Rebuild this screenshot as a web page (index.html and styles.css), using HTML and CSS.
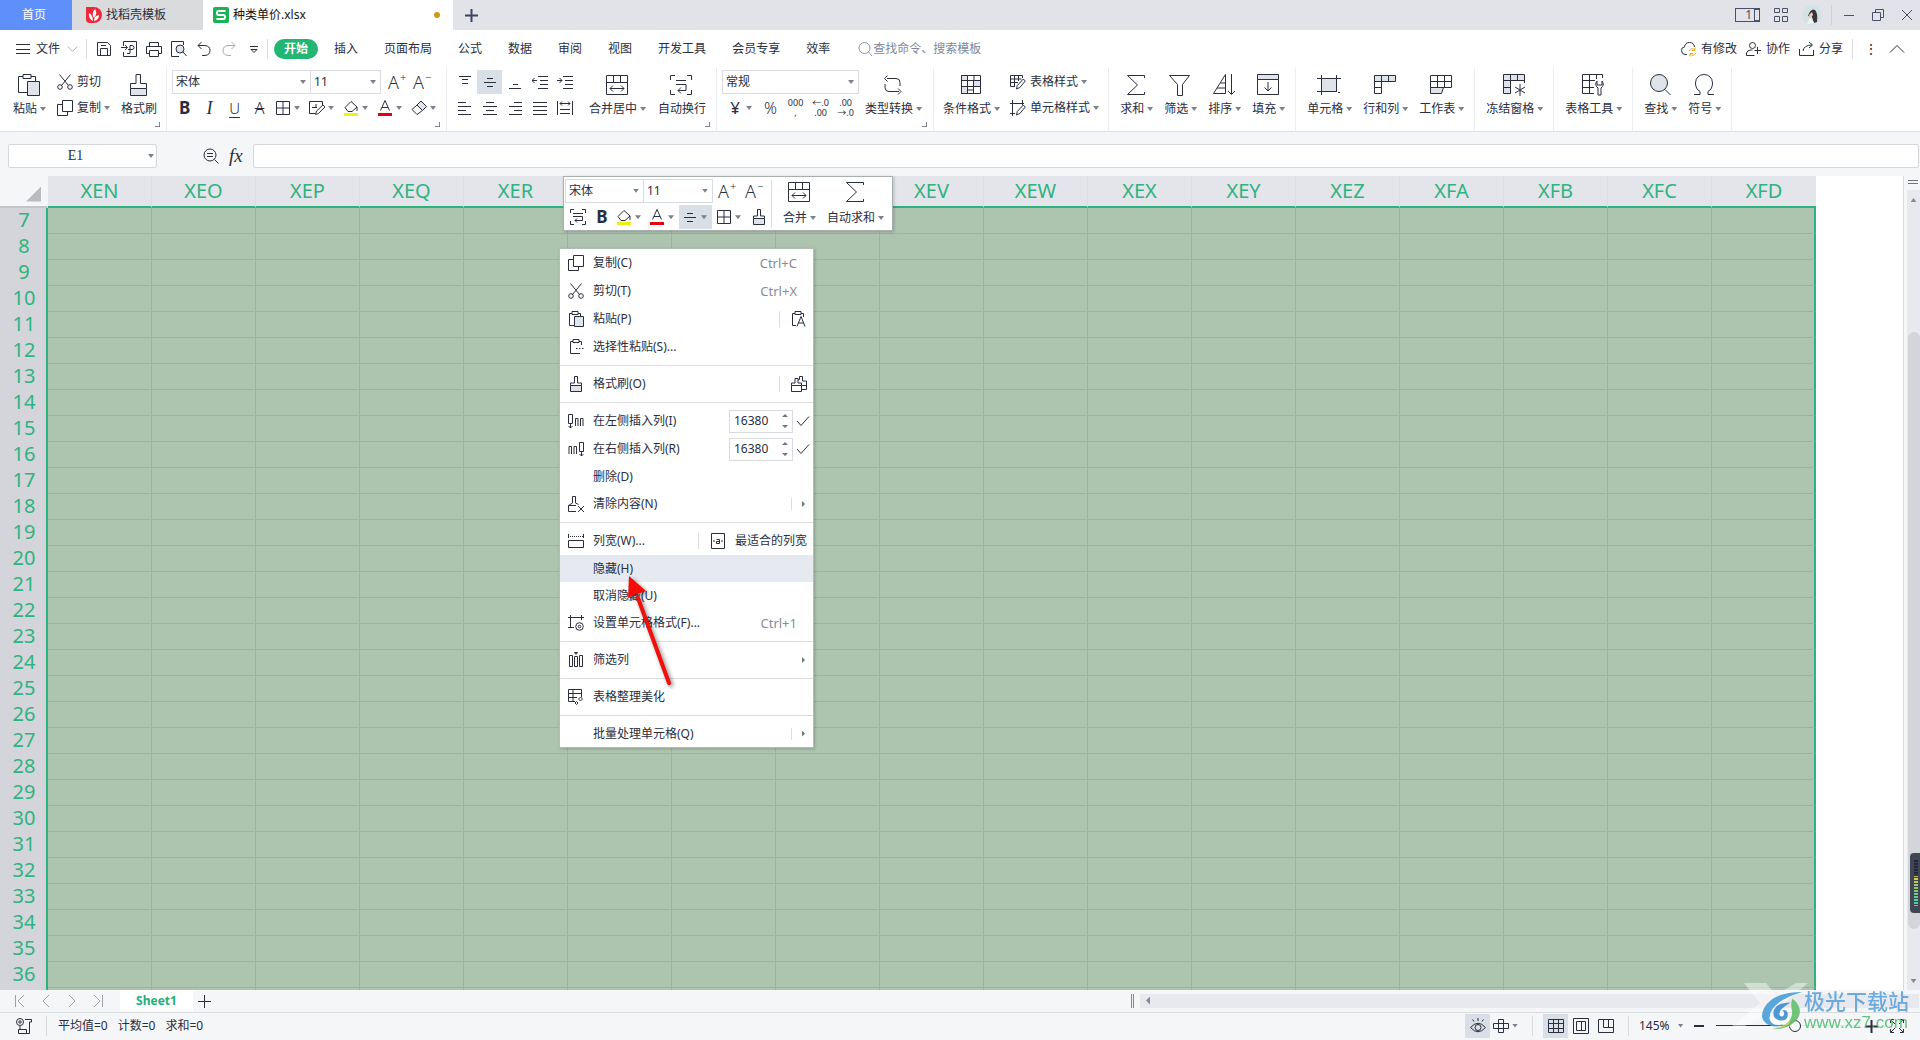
FILE: index.html
```html
<!DOCTYPE html>
<html lang="zh-CN">
<head>
<meta charset="utf-8">
<title>种类单价.xlsx</title>
<link rel="stylesheet" href="styles.css">
</head>
<body>
<svg class="sprite" aria-hidden="true">
  <symbol id="paste" viewBox="0 0 24 24"><path d="M6 3.500H1.500v16H10M14 3.500h4.500V8M6 1.500h8v4H6z"/><path class="tint" d="M10.500 8.500h12v14h-12z"/></symbol>
  <symbol id="paste-s" viewBox="0 0 16 16"><path d="M4 2.500H1.500v12H6M10 2.500h2.500V5M4 .5h6v3H4z"/><path class="tint" d="M6.500 5.500h9v10h-9z"/></symbol>
  <symbol id="paste-a" viewBox="0 0 16 16"><path d="M4 2.500H1.500v12H5M10 2.500h2.500V6M4 .5h6v3H4zM6 15.500l4-10 4 10M7.500 12h5"/></symbol>
  <symbol id="paste-d" viewBox="0 0 16 16"><path d="M5 2.500H2.500v12H12M11 2.500h2.500V6M5 .5h6v3H5zM8 9.500h1.500M11 9.500h1.500M14 9.500h1.500"/></symbol>
  <symbol id="cut" viewBox="0 0 16 16"><path d="M2.500.5l9 11M13.500.5l-9 11"/><circle cx="3" cy="13" r="2.300"/><circle cx="13" cy="13" r="2.300"/></symbol>
  <symbol id="copy" viewBox="0 0 16 16"><path d="M5.500.5h10v11h-10zM5.500 4.500h-5v11h10v-4"/></symbol>
  <symbol id="brush" viewBox="0 0 24 24"><path class="tint" d="M4.500 15.500h16v7h-16z"/><path d="M4.500 15.500v-5h5.500v-9h4.500v9h6v5"/></symbol>
  <symbol id="brush-s" viewBox="0 0 16 16"><path class="tint" d="M2.500 9.500h11v6h-11z"/><path d="M2.500 9.500v-2.500h4V.5h3V7h4v2.500"/></symbol>
  <symbol id="brush-2" viewBox="0 0 16 16"><path d="M.5 9.500h10v6H.5zM.5 9.500V7H4V2.500h3V7h3.500v2.500M7 4l1.500-.5V.5h3V5h4v8.500h-5M11 9.500h4.500"/></symbol>
  <symbol id="clear" viewBox="0 0 16 16"><path d="M8 15.500H.5v-6L4.500 7V.5h3V7l3 1.500M.5 9.500H8M10 10l6 6M16 10l-6 6"/></symbol>
  <symbol id="grid" viewBox="0 0 16 16"><path d="M1.500 1.500h13v13h-13zM8 1.500v13M1.500 8h13"/></symbol>
  <symbol id="pen-grid" viewBox="0 0 16 16"><path d="M6 13.500H.5V1.500h13V5M3 7.500h5M7 4v4M6.500 14.500l1-3.500 6.500-6 2 2-6.500 6.500z"/></symbol>
  <symbol id="fill" viewBox="0 0 16 16"><path d="M8 1.500l6 5.500-5 4.500H5L2 7.500zM14 7v4"/><path d="M1 14.500h14" style="stroke:#f2ee18;stroke-width:3"/></symbol>
  <symbol id="fcolor" viewBox="0 0 16 16"><path d="M3.500 10.500L8 .5l4.500 10M5 7.500h6"/><path d="M1 14.500h14" style="stroke:#e60012;stroke-width:3"/></symbol>
  <symbol id="eraser" viewBox="0 0 16 16"><path class="tint" d="M6 5l4-4 5.500 5.500-4 4z"/><path d="M6 5L1 9.500l5 5 5.500-4"/></symbol>
  <symbol id="va-t" viewBox="0 0 16 16"><path d="M2 2.500h12M5 5.500h6M5 9.500h6"/></symbol>
  <symbol id="va-m" viewBox="0 0 16 16"><path d="M5 4.500h6M2 8.500h12M5 12.500h6"/></symbol>
  <symbol id="va-b" viewBox="0 0 16 16"><path d="M6 10.500h5M2 14.500h12"/></symbol>
  <symbol id="ind-l" viewBox="0 0 16 16"><path d="M6 2.500h10M8 6.500h8M8 10.500h8M6 14.500h10M0 6.500h5M2.500 4L0 6.500 2.500 9"/></symbol>
  <symbol id="ind-r" viewBox="0 0 16 16"><path d="M6 2.500h10M8 6.500h8M8 10.500h8M6 14.500h10M0 6.500h5M2.500 4L5 6.500 2.500 9"/></symbol>
  <symbol id="al-l" viewBox="0 0 16 16"><path d="M1 2.500h8M1 6.500h13M1 10.500h8M1 14.500h13"/></symbol>
  <symbol id="al-c" viewBox="0 0 16 16"><path d="M4 2.500h8M1 6.500h14M4 10.500h8M1 14.500h14"/></symbol>
  <symbol id="al-r" viewBox="0 0 16 16"><path d="M7 2.500h8M2 6.500h13M7 10.500h8M2 14.500h13"/></symbol>
  <symbol id="al-j" viewBox="0 0 16 16"><path d="M1 2.500h14M1 6.500h14M1 10.500h14M1 14.500h14"/></symbol>
  <symbol id="al-d" viewBox="0 0 16 16"><path d="M.5 1v14M15.500 1v14M3 3.500h10M5 1.500l-2 2 2 2M11 1.500l2 2-2 2M3 9.500h10M3 13.500h10"/></symbol>
  <symbol id="merge" viewBox="0 0 24 24"><path d="M1.500 2.500h21v19h-21zM1.500 9.500h21M8.500 2.500v7M15.500 2.500v7M5 15.500h14M8 12.500l-3 3 3 3M16 12.500l3 3-3 3"/></symbol>
  <symbol id="wrap" viewBox="0 0 24 24"><path d="M6 2.500H1.500V7M18 2.500h4.500V7M6 21.500H1.500V17M18 21.500h4.500V17M7 7.500h10M7 11.500h10v6H9M12 14.500l-3 3 3 3"/></symbol>
  <symbol id="wrap-s" viewBox="0 0 16 16"><path d="M4 .5H.5V4M12 .5h3.500V4M4 15.500H.5V12M12 15.500h3.500V12M3 4.500h10M3 7.500h9.500v4H5M7 9.500l-2 2 2 2"/></symbol>
  <symbol id="convert" viewBox="0 0 24 24"><path d="M6 5.500h9q4 0 4 4V13M6.500 2.500l-3 3 3 3M18 18.500H8q-4 0-4-4V11M17 15.500l3 3-3 3"/></symbol>
  <symbol id="cond" viewBox="0 0 24 24"><path class="tint" d="M2.500 2.500h6v5h-6zM14.500 7.500h7v6h-7zM2.500 13.500h6v7h-6z"/><path d="M2.500 2.500h19v18h-19zM2.500 7.500h19M2.500 13.500h19M8.500 2.500v11M14.500 7.500v13M15 2.500v5M8.500 13.500v7M8.500 17h6"/></symbol>
  <symbol id="tstyle" viewBox="0 0 16 16"><path d="M5 12.500H.5V1.500h12V4M.5 5h11M.5 8.500H8M4.500 1.500v11M8.500 1.500V7M6.500 15l.8-3.500 6-6.500 2 2-5.500 6.500z"/></symbol>
  <symbol id="cstyle" viewBox="0 0 16 16"><path d="M0 3.500h14M2.500 0v16M0 13.500h5M12.500 0v5M6.500 15l.8-3.500 6-6.500 2 2-5.500 6.500z"/></symbol>
  <symbol id="sum" viewBox="0 0 24 24"><path d="M20.500 5V2.500H3.500l10 9.500-10 9.500h17V19"/></symbol>
  <symbol id="filter" viewBox="0 0 24 24"><path d="M1.500 2.500h20l-7 9v11h-5v-11z"/></symbol>
  <symbol id="sort" viewBox="0 0 24 24"><path d="M1.500 20.500L13.500 1.500v19zM5 15h8.500M8.500 10h5M19.500 1v20M16 18l3.500 3.500L23 18"/></symbol>
  <symbol id="filld" viewBox="0 0 24 24"><path class="tint" d="M1.500 1.500h21v5h-21z"/><path d="M1.500 6.500v15h21v-15M12 9v9M8.500 14.500L12 18l3.500-3.500"/></symbol>
  <symbol id="cell" viewBox="0 0 24 24"><path class="tint" d="M4.500 5.500h15v13h-15z"/><path d="M0 5.500h24M0 18.500h20M4.500 2v20M19.500 2v14M21 19.500h2"/></symbol>
  <symbol id="rowcol" viewBox="0 0 24 24"><path class="tint" d="M1.500 2.500h21v6h-21z"/><path d="M1.500 8.500v12h7v-12M8.500 2.500v6M15.500 2.500v6M1.500 14.500h7"/></symbol>
  <symbol id="wsheet" viewBox="0 0 24 24"><path class="tint" d="M1.500 14.500h13l-2 6h-11z"/><path d="M1.500 2.500h21v12h-21zM1.500 8.500h21M8.500 2.500v12M15.500 2.500v12"/></symbol>
  <symbol id="freeze" viewBox="0 0 24 24"><path class="tint" d="M1.500 1.500h21v6h-14v13h-7z"/><path d="M1.500 7.500h7M1.500 14.500h7M8.500 1.500v6M15.500 1.500v6M22.500 7v3M18 11v12M13 14l10 6M23 14l-10 6"/></symbol>
  <symbol id="ttool" viewBox="0 0 24 24"><path d="M13 20.500H1.500v-19h20V5M1.500 7.500H14M1.500 14.500H13M8.500 1.500v19M15.500 1.500V6M16 8q-3 4 1 7v7h3v-7q4-3 1-7v4h-5z"/></symbol>
  <symbol id="find" viewBox="0 0 24 24"><circle class="tint" cx="11" cy="10" r="8.500"/><path d="M17 16.500l5.500 5.500"/></symbol>
  <symbol id="omega" viewBox="0 0 24 24"><path d="M2 21.500h6v-3Q3.500 16 3.500 10 4 2 12 1.500 20 2 20.500 10q0 6-4.500 8.500v3h6"/></symbol>
  <symbol id="menu" viewBox="0 0 16 16"><path d="M1 3.500h14M1 8.500h14M1 12.500h14"/></symbol>
  <symbol id="save" viewBox="0 0 16 16"><path d="M1.500 1.500h10l3 3v10h-13zM4.500 14V7.500h7V14M5 4.500h5"/></symbol>
  <symbol id="pdf" viewBox="0 0 16 16"><path d="M2.500 5V.5h13v15h-13V11M0 6.500h6M4 4l2.500 2.500L4 9M6 12.500h3v-8h2q2 0 2 2t-2 2H7"/></symbol>
  <symbol id="print" viewBox="0 0 16 16"><path d="M3.500 5V1.500h9V5M3 12.500H.5v-7h15v7H13M3.500 9.500h9v6h-9z"/></symbol>
  <symbol id="preview" viewBox="0 0 16 16"><path d="M12.500 4V.5H.5v15H8"/><circle class="tint" cx="9" cy="8" r="4"/><path d="M12 11l3.500 4"/></symbol>
  <symbol id="undo" viewBox="0 0 16 16"><path d="M5.500 1L2 4.500 5.500 8M2 4.500h7q5 .5 5 5t-5 5H6"/></symbol>
  <symbol id="redo" viewBox="0 0 16 16"><path d="M10.500 1L14 4.500 10.500 8M14 4.500H7q-5 .5-5 5t5 5h3"/></symbol>
  <symbol id="more" viewBox="0 0 16 16"><path d="M4 5.500h8M5 8.500l3 3 3-3z"/></symbol>
  <symbol id="down" viewBox="0 0 16 16"><path d="M3 5.500l5 5 5-5"/></symbol>
  <symbol id="up" viewBox="0 0 16 16"><path d="M1 11.500l7-7 7 7"/></symbol>
  <symbol id="search" viewBox="0 0 16 16"><circle cx="7.500" cy="7" r="5.500"/><path d="M11.500 11l3.500 4"/></symbol>
  <symbol id="zoomout" viewBox="0 0 16 16"><circle cx="7" cy="7" r="6"/><path d="M11.500 11.500l4 4M4 5.500h6M4 8.500h6"/></symbol>
  <symbol id="cloud" viewBox="0 0 16 16"><path d="M6 13.500H4Q.5 13 .5 9.500T3.500 6Q4 1.500 8.500 1.500T13.500 6"/><path d="M8 10q3-4 6-1M14 6.500V9.500h-3M15 12q-3 4-6 1M9 15.500v-3h3" style="stroke:#f0a91e"/></symbol>
  <symbol id="people" viewBox="0 0 16 16"><circle cx="6.500" cy="4.500" r="3"/><path d="M8.500 14.500h-8V12q1-3 4-3h2M11.500 6v7M8.500 9.500H15"/></symbol>
  <symbol id="share" viewBox="0 0 16 16"><path d="M.5 8v6.500h14V9M4 10q1-6 9-6M10 1l3.500 3L10 7"/></symbol>
  <symbol id="insl" viewBox="0 0 16 16"><path d="M.5 1.500h4v9h-4zM2.500 10v5M.5 13l2 2 2-2M7.500 13V5.500h2.500V13M12.500 13V5.500h2.500V13"/></symbol>
  <symbol id="insr" viewBox="0 0 16 16"><path d="M11.500 1.500h4v9h-4zM13.500 10v5M11.500 13l2 2 2-2M1 13V5.500h2.500V13M6 13V5.500h2.500V13"/></symbol>
  <symbol id="colw" viewBox="0 0 16 16"><path d="M.5 7.500h15v7H.5zM.5 1v4M15.500 1v4"/><path d="M2 3.500h13" stroke-dasharray="1 1"/></symbol>
  <symbol id="fit" viewBox="0 0 16 16"><path d="M1.500.5h13v15h-13zM3 8h2M11 8h2M6.500 6.500h3v4h-3V8.500h3"/></symbol>
  <symbol id="fmt" viewBox="0 0 16 16"><path d="M0 2.500h16M2.500 0v13M0 12.500h6M13.500 0v5"/><circle cx="11.500" cy="11.500" r="3.800"/><circle cx="11.500" cy="11.500" r="1.300"/></symbol>
  <symbol id="cols" viewBox="0 0 16 16"><path d="M1.500 3.500h3v11h-3zM6.500 4.500h3v10h-3zM11.500 3.500h3v11h-3zM6.500.5h3l-1.500 2z"/></symbol>
  <symbol id="beauty" viewBox="0 0 16 16"><path d="M7 12.500H.5V.5h13V8M.5 4.500h13M.5 8.500H9M5 .5v12M12.500 8l2 2-2 2-2-2zM8.500 12.500l1.500 1.500-1.500 1.500L7 14z"/></symbol>
  <symbol id="macro" viewBox="0 0 16 16"><circle cx="4" cy="4" r="3.500"/><circle cx="4" cy="4" r="1.200"/><path d="M9 1.500h6.500V4h-2v9M4 8v3M2.500 11.500h8v4h-8zM13.500 13v2.500H10"/></symbol>
  <symbol id="eye" viewBox="0 0 16 16"><path d="M.5 9.500Q8 1 15.500 9.500 8 18 .5 9.500zM8 0v3M2.500 1.500l1.500 2M13.500 1.500l-1.500 2"/><circle cx="8" cy="9.500" r="3"/></symbol>
  <symbol id="cross" viewBox="0 0 16 16"><path d="M5.500 1.500h5v13h-5zM.5 5.500h15v5H.5z"/></symbol>
  <symbol id="v1" viewBox="0 0 16 16"><path d="M.5 1.500h15v13H.5zM.5 5.500h15M.5 10.500h15M5.500 1.500v13M10.500 1.500v13"/></symbol>
  <symbol id="v2" viewBox="0 0 16 16"><path d="M.5.5h15v15H.5zM3.500 3.500h9v9h-9zM8.500 3.500v9"/></symbol>
  <symbol id="v3" viewBox="0 0 16 16"><path d="M.5 1.500h15v13H.5zM5.500 1.500v8h10M10.500 1.500v8"/></symbol>
  <symbol id="full" viewBox="0 0 16 16"><path d="M5 1.500H1.500V5M11 1.500h3.500V5M5 14.500H1.500V11M11 14.500h3.500V11M2 2l4 4M14 2l-4 4M2 14l4-4M14 14l-4-4"/></symbol>
  <symbol id="apps" viewBox="0 0 16 16"><path d="M1.500 1.500h5v4h-5zM9.500 1.500h5v4h-5zM1.500 9.500h5v5h-5zM9.500 9.500h5v5h-5z"/></symbol>
  <symbol id="min" viewBox="0 0 16 16"><path d="M3 8.500h10"/></symbol>
  <symbol id="restore" viewBox="0 0 16 16"><path d="M2.500 5.500h8v8h-8zM5.500 5.500v-3h8v8h-3"/></symbol>
  <symbol id="close" viewBox="0 0 16 16"><path d="M3 3l10 10M13 3L3 13"/></symbol>
  <symbol id="plus" viewBox="0 0 16 16"><path d="M8.500 2v13M2 8.500h13"/></symbol>
  <symbol id="minus" viewBox="0 0 16 16"><path d="M3 8h10"/></symbol>
  <symbol id="first" viewBox="0 0 16 16"><path d="M3.500 2v12M12 2L6 8l6 6"/></symbol>
  <symbol id="prev" viewBox="0 0 16 16"><path d="M11 2L5 8l6 6"/></symbol>
  <symbol id="next" viewBox="0 0 16 16"><path d="M5 2l6 6-6 6"/></symbol>
  <symbol id="last" viewBox="0 0 16 16"><path d="M12.500 2v12M4 2l6 6-6 6"/></symbol>
  <symbol id="check" viewBox="0 0 16 16"><path d="M2 8l4 4.500L14 3.500"/></symbol>
</svg>

<header class="titlebar">
  <button class="tab home">首页</button>
  <button class="tab docer"><svg viewBox="0 0 16 16"><path fill="#f0283c" d="M0 0h8a8 8 0 0 1 0 16H4a4 4 0 0 1-4-4z"/><path fill="#fff" d="M7 14Q2 11 3 6q4 2 4 8zm1-3Q5 6 9 2q3 4-1 9zm0 3q0-5 5-6 0 5-5 6z"/></svg>找稻壳模板</button>
  <button class="tab current"><svg viewBox="0 0 16 16"><rect width="16" height="16" rx="2" fill="#19b355"/><path fill="none" stroke="#fff" stroke-width="2" d="M12.500 4h-7q-1.500 0-1.500 2t1.500 2h5q1.500 0 1.500 2t-1.500 2h-7"/></svg>种类单价.xlsx<i class="dot"></i></button>
  <button class="newtab" aria-label="新建"><svg class="ic"><use href="#plus"/></svg></button>
  <div class="window">
    <button class="badge" aria-label="窗口"><span>1</span><i></i></button>
    <button aria-label="应用"><svg class="ic"><use href="#apps"/></svg></button>
    <button aria-label="帐户"><svg class="avatar" viewBox="0 0 20 20"><circle cx="10" cy="10" r="10" fill="#d3e3e3"/><path fill="#3a3436" d="M6 11q3-8 7-6 3 3 2 12l-3 1-2-6z"/><path fill="#e8cfc6" d="M7 10l3-3 1 3-3 4z"/><path fill="#f7f7f5" d="M5 19l3-6 4 5z"/></svg></button>
    <i class="vr"></i>
    <button aria-label="最小化"><svg class="ic"><use href="#min"/></svg></button>
    <button aria-label="还原"><svg class="ic"><use href="#restore"/></svg></button>
    <button aria-label="关闭"><svg class="ic"><use href="#close"/></svg></button>
  </div>
</header>

<nav class="menubar">
  <button class="file"><svg class="ic"><use href="#menu"/></svg>文件<svg class="ic pale"><use href="#down"/></svg></button>
  <i class="vr"></i>
  <div class="quick">
    <button aria-label="保存"><svg class="ic"><use href="#save"/></svg></button>
    <button aria-label="输出为PDF"><svg class="ic"><use href="#pdf"/></svg></button>
    <button aria-label="打印"><svg class="ic"><use href="#print"/></svg></button>
    <button aria-label="打印预览"><svg class="ic"><use href="#preview"/></svg></button>
    <button aria-label="撤销"><svg class="ic"><use href="#undo"/></svg></button>
    <button aria-label="恢复"><svg class="ic pale"><use href="#redo"/></svg></button>
    <button aria-label="更多"><svg class="ic"><use href="#more"/></svg></button>
  </div>
  <i class="vr"></i>
  <div class="tabs">
    <button class="on">开始</button><button>插入</button><button>页面布局</button><button>公式</button><button>数据</button><button>审阅</button><button>视图</button><button>开发工具</button><button>会员专享</button><button>效率</button>
  </div>
  <label class="search"><svg class="ic"><use href="#search"/></svg><input type="text" placeholder="查找命令、搜索模板"></label>
  <div class="cloud">
    <button><svg class="ic"><use href="#cloud"/></svg>有修改</button>
    <button><svg class="ic"><use href="#people"/></svg>协作</button>
    <button><svg class="ic"><use href="#share"/></svg>分享</button>
    <i class="vr"></i>
    <button class="dots" aria-label="更多选项">⋮</button>
    <button aria-label="收起功能区"><svg class="ic"><use href="#up"/></svg></button>
  </div>
</nav>

<section class="ribbon">
  <div class="group g1">
    <button class="big"><svg class="ic l"><use href="#paste"/></svg><span>粘贴<i class="caret"></i></span></button>
    <div class="rows">
      <button class="line"><svg class="ic"><use href="#cut"/></svg>剪切</button>
      <button class="line"><svg class="ic"><use href="#copy"/></svg>复制<i class="caret"></i></button>
    </div>
    <button class="big"><svg class="ic l"><use href="#brush"/></svg><span>格式刷</span></button>
    <i class="corner"></i>
  </div>
  <div class="group g2">
    <div class="rows">
      <div class="row">
        <label class="pick font"><select aria-label="字体"><option>宋体</option></select><i class="caret"></i></label>
        <label class="pick size"><select aria-label="字号"><option>11</option></select><i class="caret"></i></label>
        <button class="az" aria-label="增大字号">A<sup>+</sup></button>
        <button class="az" aria-label="减小字号">A<sup>−</sup></button>
      </div>
      <div class="row">
        <button class="cell b">B</button><button class="cell i">I</button><button class="cell u">U</button><button class="cell s">A</button>
        <button class="drop" aria-label="边框"><svg class="ic"><use href="#grid"/></svg><i class="caret"></i></button>
        <button class="drop" aria-label="绘制边框"><svg class="ic"><use href="#pen-grid"/></svg><i class="caret"></i></button>
        <button class="drop" aria-label="填充颜色"><svg class="ic"><use href="#fill"/></svg><i class="caret"></i></button>
        <button class="drop" aria-label="字体颜色"><svg class="ic"><use href="#fcolor"/></svg><i class="caret"></i></button>
        <button class="drop" aria-label="清除"><svg class="ic"><use href="#eraser"/></svg><i class="caret"></i></button>
      </div>
    </div>
    <i class="corner"></i>
  </div>
  <div class="group g3">
    <div class="rows">
      <div class="row">
        <button class="cell" aria-label="顶端对齐"><svg class="ic"><use href="#va-t"/></svg></button>
        <button class="cell on" aria-label="垂直居中"><svg class="ic"><use href="#va-m"/></svg></button>
        <button class="cell" aria-label="底端对齐"><svg class="ic"><use href="#va-b"/></svg></button>
        <button class="cell" aria-label="减少缩进"><svg class="ic"><use href="#ind-l"/></svg></button>
        <button class="cell" aria-label="增加缩进"><svg class="ic"><use href="#ind-r"/></svg></button>
      </div>
      <div class="row">
        <button class="cell" aria-label="左对齐"><svg class="ic"><use href="#al-l"/></svg></button>
        <button class="cell" aria-label="居中"><svg class="ic"><use href="#al-c"/></svg></button>
        <button class="cell" aria-label="右对齐"><svg class="ic"><use href="#al-r"/></svg></button>
        <button class="cell" aria-label="两端对齐"><svg class="ic"><use href="#al-j"/></svg></button>
        <button class="cell" aria-label="分散对齐"><svg class="ic"><use href="#al-d"/></svg></button>
      </div>
    </div>
    <button class="big"><svg class="ic l"><use href="#merge"/></svg><span>合并居中<i class="caret"></i></span></button>
    <button class="big"><svg class="ic l"><use href="#wrap"/></svg><span>自动换行</span></button>
    <i class="corner"></i>
  </div>
  <div class="group g4">
    <div class="rows">
      <div class="row"><label class="pick num"><select aria-label="数字格式"><option>常规</option></select><i class="caret"></i></label></div>
      <div class="row">
        <button class="drop yen"><span>¥</span><i class="caret"></i></button>
        <button class="cell pct">%</button>
        <button class="cell tiny"><span>000</span><span>,</span></button>
        <button class="cell tiny"><span>←.0</span><span>.00</span></button>
        <button class="cell tiny"><span>.00</span><span>→.0</span></button>
      </div>
    </div>
    <button class="big"><svg class="ic l"><use href="#convert"/></svg><span>类型转换<i class="caret"></i></span></button>
    <i class="corner"></i>
  </div>
  <div class="group g5">
    <button class="big"><svg class="ic l"><use href="#cond"/></svg><span>条件格式<i class="caret"></i></span></button>
    <div class="rows">
      <button class="line"><svg class="ic"><use href="#tstyle"/></svg>表格样式<i class="caret"></i></button>
      <button class="line"><svg class="ic"><use href="#cstyle"/></svg>单元格样式<i class="caret"></i></button>
    </div>
  </div>
  <div class="group">
    <button class="big"><svg class="ic l"><use href="#sum"/></svg><span>求和<i class="caret"></i></span></button>
    <button class="big"><svg class="ic l"><use href="#filter"/></svg><span>筛选<i class="caret"></i></span></button>
    <button class="big"><svg class="ic l"><use href="#sort"/></svg><span>排序<i class="caret"></i></span></button>
    <button class="big"><svg class="ic l"><use href="#filld"/></svg><span>填充<i class="caret"></i></span></button>
  </div>
  <div class="group">
    <button class="big"><svg class="ic l"><use href="#cell"/></svg><span>单元格<i class="caret"></i></span></button>
    <button class="big"><svg class="ic l"><use href="#rowcol"/></svg><span>行和列<i class="caret"></i></span></button>
    <button class="big"><svg class="ic l"><use href="#wsheet"/></svg><span>工作表<i class="caret"></i></span></button>
  </div>
  <div class="group"><button class="big"><svg class="ic l"><use href="#freeze"/></svg><span>冻结窗格<i class="caret"></i></span></button></div>
  <div class="group"><button class="big"><svg class="ic l"><use href="#ttool"/></svg><span>表格工具<i class="caret"></i></span></button></div>
  <div class="group">
    <button class="big"><svg class="ic l"><use href="#find"/></svg><span>查找<i class="caret"></i></span></button>
    <button class="big"><svg class="ic l"><use href="#omega"/></svg><span>符号<i class="caret"></i></span></button>
  </div>
</section>

<section class="formula">
  <label class="namebox"><input type="text" value="E1" aria-label="名称框"><i class="caret"></i></label>
  <button aria-label="浏览公式"><svg class="ic"><use href="#zoomout"/></svg></button>
  <button class="fx">fx</button>
  <input class="fbox" type="text" aria-label="编辑栏">
</section>

<main class="sheet">
  <div class="cells">
    <table>
      <thead><tr id="heads"><th class="origin"><i></i></th></tr></thead>
      <tbody id="body"></tbody>
    </table>
  </div>
  <div class="vscroll"><i class="split"></i><div class="track"><i class="tri up"></i><i class="thumb"></i><i class="tri dn"></i></div><i class="meter"></i></div>

  <div class="mini">
    <div class="rows">
      <div class="row">
        <label class="pick mfont"><select aria-label="字体"><option>宋体</option></select><i class="caret"></i></label>
        <label class="pick msize"><select aria-label="字号"><option>11</option></select><i class="caret"></i></label>
        <button class="az" aria-label="增大字号">A<sup>+</sup></button>
        <button class="az" aria-label="减小字号">A<sup>−</sup></button>
      </div>
      <div class="row">
        <button class="cell" aria-label="自动换行"><svg class="ic"><use href="#wrap-s"/></svg></button>
        <button class="cell b">B</button>
        <button class="drop" aria-label="填充颜色"><svg class="ic"><use href="#fill"/></svg><i class="caret"></i></button>
        <button class="drop" aria-label="字体颜色"><svg class="ic"><use href="#fcolor"/></svg><i class="caret"></i></button>
        <button class="drop on" aria-label="对齐"><svg class="ic"><use href="#va-m"/></svg><i class="caret"></i></button>
        <button class="drop" aria-label="边框"><svg class="ic"><use href="#grid"/></svg><i class="caret"></i></button>
        <button class="cell" aria-label="格式刷"><svg class="ic"><use href="#brush-s"/></svg></button>
      </div>
    </div>
    <i class="vr"></i>
    <button class="big"><svg class="ic l"><use href="#merge"/></svg><span>合并<i class="caret"></i></span></button>
    <button class="big"><svg class="ic l"><use href="#sum"/></svg><span>自动求和<i class="caret"></i></span></button>
  </div>

  <div class="menu">
    <button class="item"><svg class="ic"><use href="#copy"/></svg>复制(C)<kbd>Ctrl+C</kbd></button>
    <button class="item"><svg class="ic"><use href="#cut"/></svg>剪切(T)<kbd>Ctrl+X</kbd></button>
    <button class="item"><svg class="ic"><use href="#paste-s"/></svg>粘贴(P)<span class="side"><svg class="ic"><use href="#paste-a"/></svg></span></button>
    <button class="item"><svg class="ic"><use href="#paste-d"/></svg>选择性粘贴(S)...</button>
    <hr>
    <button class="item"><svg class="ic"><use href="#brush-s"/></svg>格式刷(O)<span class="side"><svg class="ic"><use href="#brush-2"/></svg></span></button>
    <hr>
    <div class="item"><svg class="ic"><use href="#insl"/></svg><label for="n1">在左侧插入列(I)</label><span class="spin"><input id="n1" type="text" value="16380"><i></i></span><svg class="ic"><use href="#check"/></svg></div>
    <div class="item"><svg class="ic"><use href="#insr"/></svg><label for="n2">在右侧插入列(R)</label><span class="spin"><input id="n2" type="text" value="16380"><i></i></span><svg class="ic"><use href="#check"/></svg></div>
    <button class="item plain">删除(D)</button>
    <button class="item"><svg class="ic"><use href="#clear"/></svg>清除内容(N)<span class="sub cut"></span></button>
    <hr>
    <div class="item"><svg class="ic"><use href="#colw"/></svg><button>列宽(W)...</button><button class="best"><svg class="ic"><use href="#fit"/></svg>最适合的列宽</button></div>
    <button class="item plain on">隐藏(H)</button>
    <button class="item plain">取消隐藏(U)</button>
    <button class="item"><svg class="ic"><use href="#fmt"/></svg>设置单元格格式(F)...<kbd>Ctrl+1</kbd></button>
    <hr>
    <button class="item"><svg class="ic"><use href="#cols"/></svg>筛选列<span class="sub"></span></button>
    <hr>
    <button class="item"><svg class="ic"><use href="#beauty"/></svg>表格整理美化</button>
    <hr>
    <button class="item plain">批量处理单元格(Q)<span class="sub cut"></span></button>
  </div>
  <svg class="pointer" viewBox="0 0 60 124"><path stroke="#f0100c" stroke-width="4" stroke-linecap="round" d="M18 24l31 85"/><path fill="#f80a06" d="M9 2l17 15-6 2-6 2-6 3z"/></svg>
</main>

<div class="sheetbar">
  <button aria-label="第一张"><svg class="ic"><use href="#first"/></svg></button>
  <button aria-label="上一张"><svg class="ic"><use href="#prev"/></svg></button>
  <button aria-label="下一张"><svg class="ic"><use href="#next"/></svg></button>
  <button aria-label="最后一张"><svg class="ic"><use href="#last"/></svg></button>
  <button class="sheettab">Sheet1</button>
  <button class="addsheet" aria-label="新建工作表"><svg class="ic"><use href="#plus"/></svg></button>
  <div class="hscroll"><i class="grip"></i><div class="track"><i class="tri lf"></i></div></div>
</div>

<footer class="status">
  <svg class="ic"><use href="#macro"/></svg><i class="vr"></i>
  <span>平均值=0</span><span>计数=0</span><span>求和=0</span>
  <div class="views">
    <button class="cell on" aria-label="护眼模式"><svg class="ic"><use href="#eye"/></svg></button>
    <button class="drop" aria-label="阅读模式"><svg class="ic"><use href="#cross"/></svg><i class="caret"></i></button>
    <i class="vr"></i>
    <button class="cell on" aria-label="普通视图"><svg class="ic"><use href="#v1"/></svg></button>
    <button class="cell" aria-label="分页预览"><svg class="ic"><use href="#v2"/></svg></button>
    <button class="cell" aria-label="页面布局"><svg class="ic"><use href="#v3"/></svg></button>
    <i class="vr"></i>
    <button class="pc">145%<i class="caret"></i></button>
    <button class="heavy" aria-label="缩小"><svg class="ic"><use href="#minus"/></svg></button>
    <input type="range" min="0" max="100" value="55" aria-label="缩放">
    <button class="heavy" aria-label="放大"><svg class="ic"><use href="#plus"/></svg></button>
    <button aria-label="全屏"><svg class="ic"><use href="#full"/></svg></button>
  </div>
</footer>

<div class="brand">
  <svg class="ghost" viewBox="0 0 90 60"><path fill="#fff" d="M18 8h22l10 12 20-12h12L56 30l12 22H50L42 38 10 56H0l34-28z"/></svg>
  <svg class="logo" viewBox="0 0 46 42"><path fill="#4a9fdc" d="M44 1Q14 1 4 18-2 31 10 36q8 3 15-1-12 3-15-5Q8 12 44 1z"/><path fill="#63c06c" d="M34 8q14 12 3 24-10 9-24 8 24-5 20-22-1-6 1-10z"/><path fill="#3e8fd0" d="M32 12q-16 0-18 10-1 8 8 9 8 0 7-8-2-5-6-2 3 0 2 4-1 3-4 1-4-5 11-14z"/><path fill="#f3cf3f" d="M13 39q14-1 20-9-4 10-20 9z"/></svg>
  <div><b>极光下载站</b><a href="#">www.xz7.com</a></div>
</div>
<script src="grid.js"></script>
</body>
</html>
```
FILE: grid.js
```js
const columns = ["XEN","XEO","XEP","XEQ","XER","XES","XET","XEU","XEV","XEW","XEX","XEY","XEZ","XFA","XFB","XFC","XFD"];
const heads = document.getElementById("heads");
for (const name of columns) {
  const th = document.createElement("th");
  th.scope = "col";
  th.textContent = name;
  heads.append(th);
}
const body = document.getElementById("body");
const addRow = (label) => {
  const row = body.insertRow();
  const th = document.createElement("th");
  th.scope = "row";
  th.textContent = label;
  row.append(th);
  columns.forEach(() => row.insertCell());
};
for (let n = 7; n <= 36; n++) addRow(n);
addRow("");
```
FILE: styles.css
```css
* { box-sizing: border-box; }
html, body { height: 100%; }
body {
  margin: 0;
  display: flex;
  flex-direction: column;
  position: relative;
  overflow: hidden;
  background: #f5f6f8;
  color: #2a2e3e;
  font: 12px/18px "Noto Sans", "Noto Sans CJK SC", sans-serif;
}
.sprite { display: none; }
button, input, select {
  font: inherit;
  color: inherit;
  border: 0;
  padding: 0;
  margin: 0;
  background: none;
  outline: 0;
}
button { display: flex; align-items: center; white-space: nowrap; flex: none; }
.ic { width: 16px; height: 16px; flex: none; fill: none; stroke: currentColor; stroke-width: 1; }
.ic.l { width: 24px; height: 24px; }
.tint { fill: #dfe3ea; }
.pale { color: #a7abb3; }
.caret {
  flex: none;
  width: 6px;
  height: 4px;
  background: #7d818b;
  clip-path: polygon(0 0, 100% 0, 50% 100%);
}
.vr { width: 1px; height: 20px; background: #dcdde1; flex: none; }
.on { background: #d9dfe6; }

/* title bar */
.titlebar { display: flex; height: 30px; background: #e1e3e8; flex: none; }
.tab { gap: 4px; height: 30px; }
.tab svg { width: 16px; height: 16px; flex: none; }
.home { width: 72px; padding-right: 4px; justify-content: center; background: #5f8ffb; color: #fff; }
.docer { width: 131px; padding-left: 14px; background: #d9dbdd; }
.tab.current { width: 250px; padding: 0 13px 0 10px; background: #fff; color: #111; }
.dot { width: 6px; height: 6px; border-radius: 3px; background: #d09b14; margin-left: auto; }
.newtab { padding-left: 10px; color: #3c4560; }
.newtab .ic { stroke-width: 2; }
.window { display: flex; align-items: center; gap: 13px; margin-left: auto; padding-right: 5px; color: #4a5068; }
.window .vr { margin: 0 -4px; background: #cfd1d7; }
.badge { width: 25px; height: 14px; border: 1px solid #4a5068; justify-content: flex-end; gap: 2px; }
.badge i { width: 5px; height: 12px; border: 1px solid #4a5068; border-right: 0; }
.avatar { width: 20px; height: 20px; }

/* menu bar */
.menubar { display: flex; align-items: center; height: 38px; background: #fff; padding-left: 15px; flex: none; }
.file { gap: 5px; width: 71px; }
.file .pale { width: 15px; }
.quick { display: flex; gap: 9px; padding: 0 5px 0 9px; }
.tabs { display: flex; align-items: center; gap: 26px; padding-left: 6px; }
.tabs .on { background: #22b573; color: #fff; font-weight: 700; height: 20px; padding: 0 10px; border-radius: 10px; margin-right: -10px; }
.search { display: flex; align-items: center; margin-left: 27px; color: #8a92a6; }
.search input { width: 140px; }
.search input::placeholder { color: #7d879c; opacity: 1; }
.cloud { display: flex; align-items: center; gap: 9px; margin-left: auto; padding-right: 15px; }
.cloud button { gap: 4px; }
.cloud .dots { font-size: 14px; width: 18px; justify-content: center; }

/* ribbon */
.ribbon { display: flex; height: 64px; background: #fff; border-bottom: 1px solid #dfe0e4; flex: none; }
.group { position: relative; display: flex; gap: 11px; padding: 1px 10px 0 11px; border-right: 1px solid #ebecef; flex: none; }
.g1 { padding: 1px 9px 0 13px; }
.g2 { padding: 1px 4px 0 5px; }
.g3 { padding: 1px 10px 0 5px; gap: 12px; }
.g4 { padding: 1px 11px 0 5px; gap: 6px; }
.g5 { padding: 1px 9px 0 9px; gap: 10px; }
.big { flex-direction: column; height: 52px; padding-top: 4px; gap: 3px; }
.big .l { margin-right: 2px; }
.big span { display: flex; align-items: center; gap: 3px; }
.rows { display: flex; flex-direction: column; }
.row { display: flex; align-items: center; height: 26px; }
.line { height: 26px; gap: 4px; }
.line .caret { margin-left: -1px; }
.corner { position: absolute; right: 6px; bottom: 4px; width: 5px; height: 5px; border: solid #80848e; border-width: 0 1px 1px 0; }
.pick { display: flex; align-items: center; height: 24px; border: 1px solid #d9dbe0; padding-right: 4px; background: #fff; }
.pick select { appearance: none; flex: 1; min-width: 0; padding-left: 3px; height: 22px; }
.font { width: 139px; }
.size { width: 70px; border-left: 0; }
.size + .az { margin-left: 7px; }
.num { width: 137px; }
.az { width: 25px; gap: 1px; font-size: 18px; font-weight: 300; line-height: 24px; align-items: flex-start; }
.az sup { font-size: 11px; line-height: 14px; }
.cell { width: 25px; height: 24px; justify-content: center; }
.drop { width: 34px; height: 24px; padding-left: 3px; gap: 3px; }
.b { font-size: 17px; font-weight: 700; }
.i { font: italic 18px "Liberation Serif", serif; }
.u { font-size: 15px; font-weight: 300; text-decoration: underline; text-underline-offset: 3px; }
.s { font-size: 16px; font-weight: 300; text-decoration: line-through; }
.yen { width: 36px; padding-left: 5px; }
.yen span { width: 16px; font-size: 17px; text-align: center; }
.pct { font-size: 16px; font-weight: 300; }
.tiny { flex-direction: column; font-size: 9px; line-height: 10px; }

/* formula bar */
.formula { display: flex; align-items: center; height: 44px; padding: 4px 1px 0 8px; flex: none; }
.namebox { display: flex; align-items: center; width: 149px; height: 24px; background: #fff; border: 1px solid #d5d7dc; border-radius: 2px; padding-right: 2px; margin-right: 46px; }
.namebox input { flex: 1; min-width: 0; padding-right: 6px; text-align: center; font-family: "Liberation Serif", serif; font-size: 14px; }
.fx { font: italic 19px "Liberation Serif", serif; margin: 0 10px; width: 14px; }
.fbox { flex: 1; height: 24px; background: #fff; border: 1px solid #d5d7dc; border-radius: 2px; padding: 0 6px; }

/* grid */
.sheet { position: relative; display: flex; flex: 1; min-height: 0; background: #fff; }
.cells { flex: 1; min-width: 0; overflow: hidden; }
table { border-spacing: 0; table-layout: fixed; width: 1816px; }
th { font-size: 20px; line-height: 24px; font-weight: 400; color: #2fb380; padding: 0; }
thead th { height: 32px; background: #e4e5ea; border-bottom: 2px solid #2bb27f; border-right: 1px solid #dcdde3; }
thead th:last-child { border-right: 0; }
.origin { width: 48px; }
thead .origin { border-bottom: 2px solid #c3c5ca; border-right-color: transparent; background: #f5f6f8; }
.origin i { display: block; width: 15px; height: 15px; margin: 6px 6px 0 auto; background: #b9bbc0; clip-path: polygon(100% 0, 100% 100%, 0 100%); }
tbody th { height: 26px; padding: 0 0 2px 2px; background: #d3d5db; border-right: 2px solid #2bb27f; }
td { height: 26px; padding: 0; background: #adc5af; border-right: 1px solid #9cadb3; border-bottom: 1px solid #9cadb3; }
td:last-child { border-right: 2px solid #2bb27f; }
.vscroll { position: relative; display: flex; flex-direction: column; width: 17px; padding-left: 3px; background: #f5f6f8; border-left: 1px solid #d9dae0; }
.split { height: 4px; width: 10px; margin: 4px 0 6px 1px; border: solid #70747f; border-width: 1px 0; }
.track { background: #e8e9ee; }
.vscroll .track { flex: 1; display: flex; flex-direction: column; align-items: center; padding: 8px 0 7px; }
.tri { width: 6px; height: 4px; background: #868a99; flex: none; }
.up { clip-path: polygon(50% 0, 100% 100%, 0 100%); }
.dn { clip-path: polygon(0 0, 100% 0, 50% 100%); margin-top: auto; }
.lf { width: 4px; height: 8px; clip-path: polygon(0 50%, 100% 0, 100% 100%); }
.thumb { width: 12px; height: 76%; margin-top: 130px; border-radius: 6px; background: #d3d5da; flex: none; }
.meter {
  position: absolute;
  right: 0;
  bottom: 77px;
  width: 10px;
  height: 60px;
  border-radius: 4px 0 0 4px;
  border: 3px solid #414656;
  border-width: 7px 2px 7px 4px;
  background: repeating-linear-gradient(transparent 0 2px, #3d4252 2px 3px), linear-gradient(#222838 35%, #d9d34c 36%, #8fc76c 60%, #3fd0b0);
}

/* floating toolbar */
.mini {
  position: absolute;
  left: 563px;
  top: 0;
  width: 330px;
  height: 55px;
  display: flex;
  padding: 1px 0 0 1px;
  background: #fff;
  border: 1px solid #a9aeb0;
  box-shadow: 1px 1px 3px #0003;
}
.mfont { width: 79px; }
.msize { width: 69px; border-left: 0; }
.msize + .az { margin-left: 5px; }
.mini .az + .az { margin-left: 2px; }
.mini .row + .row { margin-top: 1px; }
.mini .drop { width: 33px; }
.mini .drop.on { margin-right: 1px; }
.mini .b { width: 22px; margin-left: 1px; }
.mini .vr { height: 48px; margin: 2px 11px 0 0; }
.mini .rows { width: 208px; }
.mini .big { padding-top: 2px; gap: 6px; height: 50px; margin-right: 11px; line-height: 16px; }

/* context menu */
.menu { position: absolute; left: 559px; top: 72px; width: 255px; background: #fff; border: 1px solid #b4bcb6; box-shadow: 1px 1px 3px #0003; }
.menu hr { height: 1px; border: 0; margin: 4px 0; background: #dcdde1; }
.item { display: flex; align-items: center; width: 100%; height: 28px; padding: 0 6px 0 8px; }
.item > .ic:first-child { margin-right: 9px; }
.plain { height: 27px; padding-left: 33px; }
.item.on { background: #e6e9ef; }
kbd { font: inherit; font-size: 13px; color: #888c95; margin-left: auto; padding-right: 10px; }
.side { display: flex; margin-left: auto; padding-left: 11px; border-left: 1px solid #dcdde1; }
.spin { display: flex; align-items: center; width: 64px; height: 23px; margin: 0 2px 0 auto; border: 1px solid #d9dbe0; padding-right: 4px; }
.spin + .ic { margin-right: -4px; }
.spin input { flex: 1; min-width: 0; padding-left: 4px; }
.spin i { width: 6px; height: 14px; background: #70747f; clip-path: polygon(50% 0, 100% 3px, 0 3px, 0 11px, 50% 14px, 100% 11px, 0 11px, 0 3px); }
.sub { display: flex; align-items: center; justify-content: flex-end; margin-left: auto; width: 16px; height: 12px; }
.sub::after { content: ""; width: 3px; height: 6px; margin-right: 2px; background: #70747f; clip-path: polygon(0 0, 100% 50%, 0 100%); }
.cut { border-left: 1px solid #dcdde1; }
.best { gap: 9px; margin-left: auto; padding-left: 11px; border-left: 1px solid #dcdde1; height: 16px; }
.pointer { position: absolute; left: 620px; top: 398px; width: 60px; height: 124px; fill: none; filter: drop-shadow(2px 2px 2px #0007); }

/* sheet tabs and status bar */
.sheetbar { display: flex; align-items: center; height: 23px; padding: 0 0 1px 12px; border-bottom: 1px solid #dcdde1; flex: none; }
.sheetbar button { color: #9da1aa; width: 26px; }
.sheetbar .sheettab { width: 73px; height: 21px; margin-left: 4px; justify-content: center; background: #fff; color: #22b07a; font-weight: 700; }
.sheetbar .addsheet { margin-left: 3px; color: #2a2e3e; }
.hscroll { display: flex; align-items: center; gap: 6px; width: 789px; margin-left: auto; }
.grip { width: 3px; height: 14px; border: solid #81858f; border-width: 0 1px; }
.hscroll .track { display: flex; align-items: center; flex: 1; height: 14px; padding-left: 6px; margin-right: 1px; }
.status { display: flex; align-items: center; height: 27px; padding: 0 0 2px 16px; flex: none; }
.status > .vr { margin: 0 11px 0 14px; }
.status > span { margin-right: 10px; }
.views { display: flex; align-items: center; margin-left: auto; padding-right: 15px; }
.views .vr { margin: 0 10px; }
.views .drop { width: 32px; }
.pc { gap: 8px; width: 52px; }
.heavy .ic { stroke-width: 2; }
.pc + .heavy { margin-right: 9px; }
input[type="range"] {
  appearance: none;
  width: 144px;
  height: 14px;
  margin-right: 3px;
  background: linear-gradient(90deg, #2a2e3e 52%, #e3e5ea 52%) center / 100% 1px no-repeat;
}
input[type="range"]::-webkit-slider-thumb {
  appearance: none;
  width: 12px;
  height: 12px;
  border: 1px solid #2a2e3e;
  border-radius: 6px;
  background: #f5f6f8;
}
.views .heavy:nth-last-child(2) { margin-right: 10px; }

/* site mark over the corner */
.brand { position: absolute; right: 11px; bottom: 7px; display: flex; align-items: center; pointer-events: none; opacity: .9; }
.brand div { display: flex; flex-direction: column; }
.brand b { font-weight: 500; font-size: 21px; line-height: 24px; color: #5fa3dc; }
.brand a { font: 17px/20px "Liberation Sans", sans-serif; color: #52bd75; text-decoration: none; }
.logo { width: 44px; height: 40px; }
.ghost { position: absolute; left: -34px; top: -14px; width: 90px; height: 60px; opacity: .5; }
.brand .logo, .brand div { position: relative; }
```
